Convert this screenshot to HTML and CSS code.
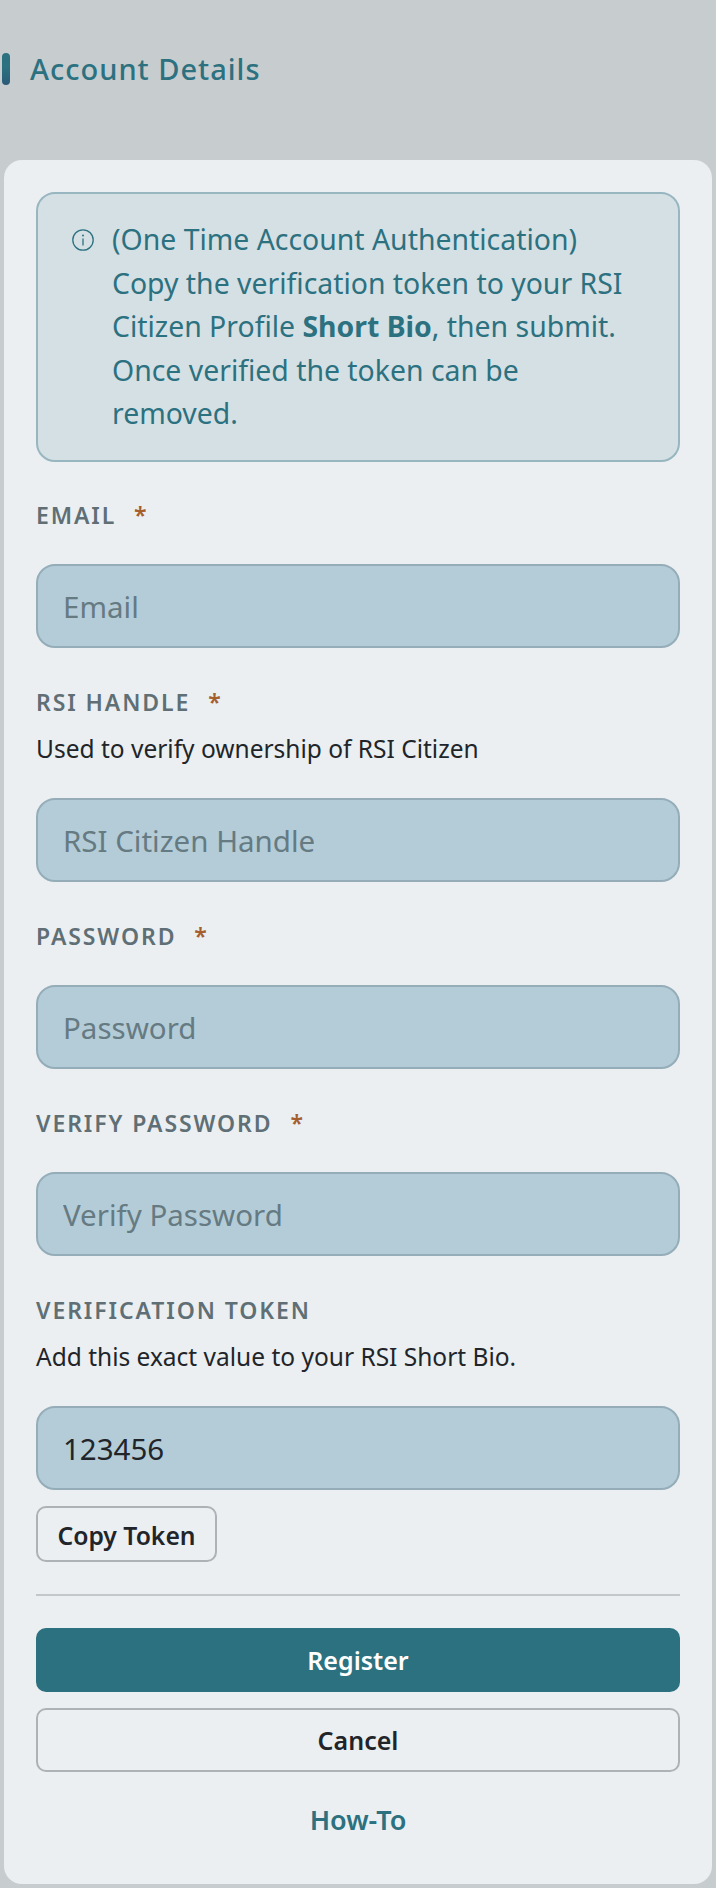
FILE: index.html
```html
<!DOCTYPE html>
<html lang="en">
<head>
<meta charset="utf-8">
<title>Account Details</title>
<link rel="stylesheet" href="styles.css">
</head>
<body>
<header class="page-header">
  <span class="accent-bar"></span>
  <h1 class="page-title">Account Details</h1>
</header>
<main class="card">
  <div class="notice">
    <svg class="notice-icon" viewBox="0 0 22 22" aria-hidden="true">
      <circle cx="11" cy="11" r="10.2" fill="none" stroke="currentColor" stroke-width="1.3"/>
      <path d="M11 9.5v7" fill="none" stroke="currentColor" stroke-width="1.3"/>
      <circle cx="11" cy="6.4" r="1" fill="currentColor"/>
    </svg>
    <p class="notice-text">(One Time Account Authentication)<br>Copy the verification token to your RSI Citizen Profile <strong>Short Bio</strong>, then submit. Once verified the token can be removed.</p>
  </div>
  <form class="form">
    <div class="field">
      <label class="label">EMAIL <span class="req">*</span></label>
      <input class="input" type="text" placeholder="Email">
    </div>
    <div class="field">
      <label class="label">RSI HANDLE <span class="req">*</span></label>
      <p class="hint">Used to verify ownership of RSI Citizen</p>
      <input class="input" type="text" placeholder="RSI Citizen Handle">
    </div>
    <div class="field">
      <label class="label">PASSWORD <span class="req">*</span></label>
      <input class="input" type="text" placeholder="Password">
    </div>
    <div class="field">
      <label class="label">VERIFY PASSWORD <span class="req">*</span></label>
      <input class="input" type="text" placeholder="Verify Password">
    </div>
    <div class="field">
      <label class="label">VERIFICATION TOKEN</label>
      <p class="hint">Add this exact value to your RSI Short Bio.</p>
      <input class="input" type="text" value="123456">
      <button class="btn btn-small" type="button">Copy Token</button>
    </div>
    <hr class="rule">
    <button class="btn btn-primary" type="button">Register</button>
    <button class="btn btn-outline" type="button">Cancel</button>
    <a class="link" href="#">How-To</a>
  </form>
</main>
</body>
</html>
```
FILE: styles.css
```css
* { box-sizing: border-box; }
html, body { margin: 0; padding: 0; }
body {
  background: #c7cccf;
  font-family: "Noto Sans", "Open Sans", sans-serif;
  color: #212529;
  width: 716px;
  height: 1888px;
  overflow: hidden;
}
.page-header {
  display: flex;
  align-items: center;
  gap: 20px;
  height: 160px;
  padding: 0 0 22px 2px;
}
.accent-bar {
  width: 8px;
  height: 32px;
  border-radius: 4px;
  background: linear-gradient(#2c7180 45%, #2b5a78);
}
.page-title {
  margin: 0 0 1px;
  font-size: 29px;
  font-weight: 500;
  letter-spacing: 1px;
  color: #2c7180;
}
.card {
  margin: 0 4px;
  height: 1724px;
  background: #ebeff2;
  border-radius: 18px;
  padding: 32px 32px 0;
}
.notice {
  display: flex;
  gap: 18px;
  height: 270px;
  padding: 24px 49px 24px 34px;
  background: #d5e0e4;
  border: 2px solid #98b6c0;
  border-radius: 19px;
  color: #2c7180;
}
.notice-icon {
  flex: none;
  width: 22px;
  height: 22px;
  margin-top: 11px;
}
.notice-text {
  margin: 0;
  font-size: 28.4px;
  line-height: 43.5px;
}
.form { display: flex; flex-direction: column; margin-top: -1px; }
.field { display: flex; flex-direction: column; margin-top: 38.5px; }
.label {
  font-size: 23px;
  font-weight: 600;
  letter-spacing: 1.9px;
  color: #5f6f75;
  line-height: 30px;
  margin-bottom: 15.5px;
}
.label + .input { margin-top: 19px; }
.req { color: #a65e2e; margin-left: 10px; }
.hint {
  margin: 0 0 33px;
  font-size: 24.5px;
  line-height: 33px;
}
.input {
  height: 84px;
  width: 100%;
  padding: 0 25px;
  border: 2px solid #94adb9;
  border-radius: 19px;
  background: #b3ccd8;
  font: inherit;
  font-size: 29.5px;
  color: #212529;
}
.input::placeholder { color: #667a82; opacity: 1; }
.btn {
  font: inherit;
  font-weight: 600;
  font-size: 25px;
  color: #212529;
  background: transparent;
  border: 2px solid #adb2b6;
  border-radius: 10px;
}
.btn-small {
  align-self: flex-start;
  width: 181px;
  height: 56px;
  margin-top: 16px;
  padding-top: 4px;
  font-size: 24.7px;
}
.rule { width: 100%; margin: 32px 0; border: 0; border-top: 2px solid #c2c7ca; }
.btn-primary { height: 64px; background: #2c7180; border-color: #2c7180; color: #fff; }
.btn-outline { height: 64px; margin-top: 16px; }
.link {
  margin-top: 30px;
  text-align: center;
  font-size: 27px;
  line-height: 36px;
  font-weight: 600;
  color: #2c7180;
  text-decoration: none;
}
```
